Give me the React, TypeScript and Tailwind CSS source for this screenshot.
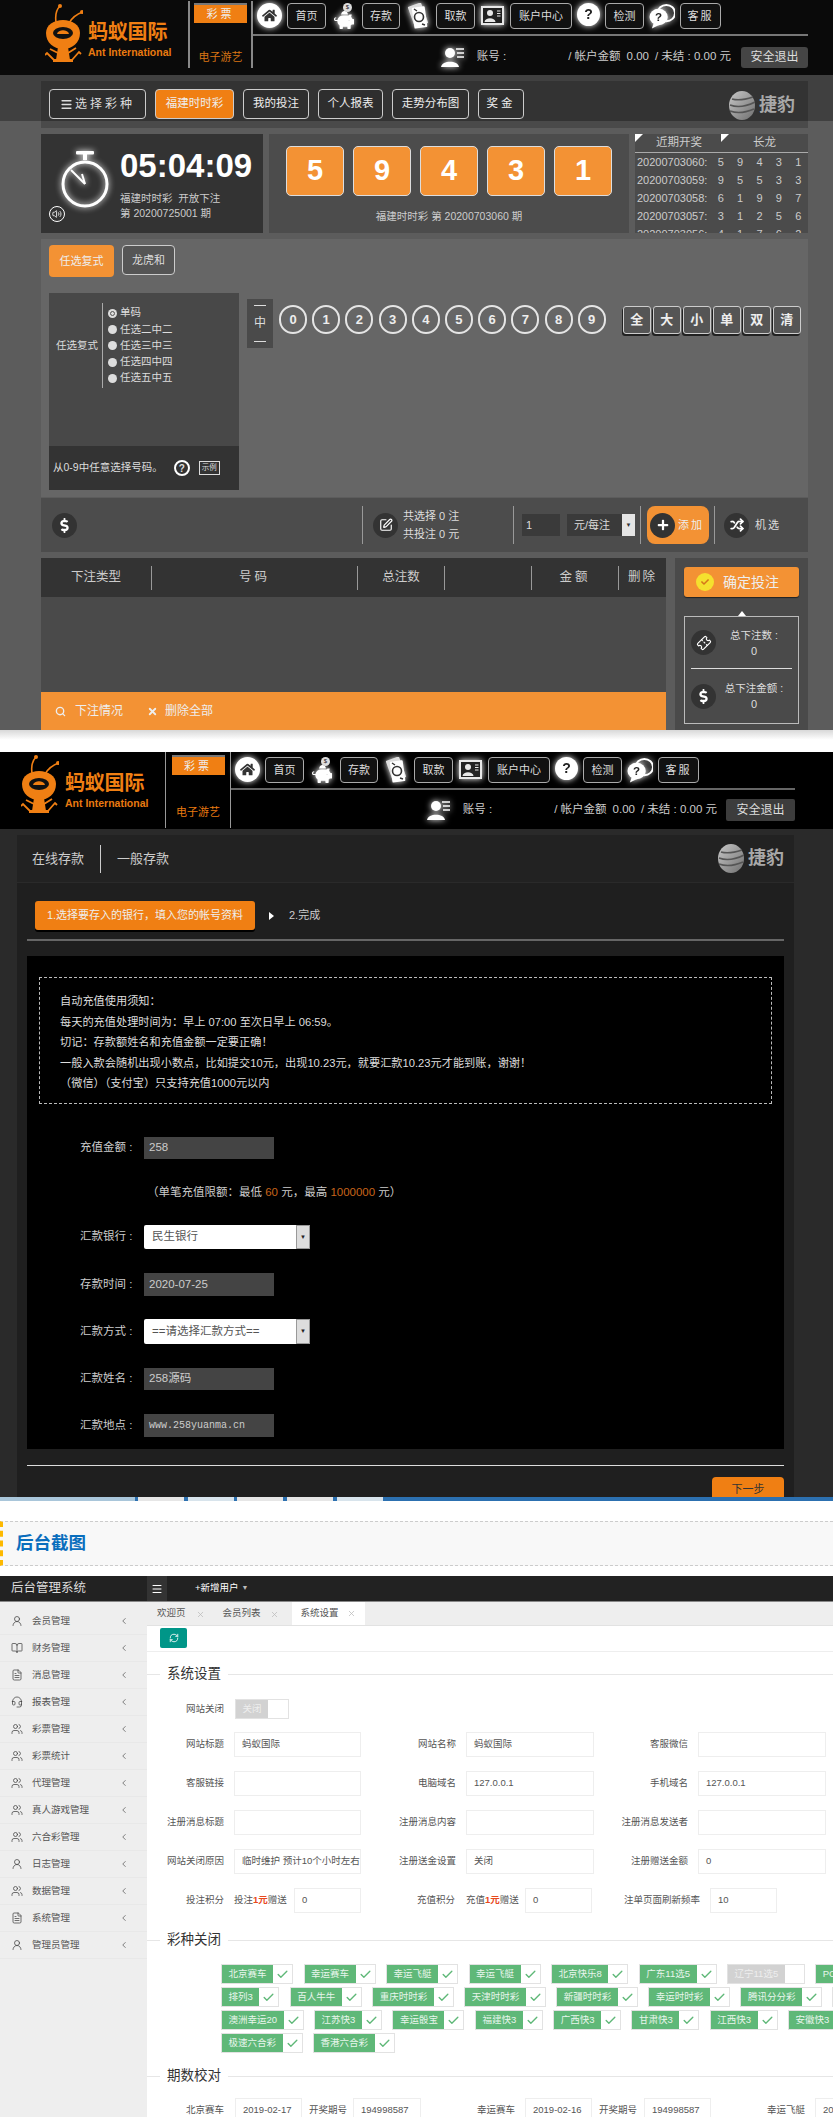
import { BookOpen, Check, ChevronLeft, FileText, Headset, Menu, RefreshCw, Search, Shuffle, SquarePen, Ticket, UserRound, Users, Volume2, X } from "lucide-react";
import { FaHome, FaPiggyBank, FaPlus, FaDollarSign, FaCheck } from "react-icons/fa";

const glow = "drop-shadow-[0_0_3px_#ffffff]";

/** 蚂蚁 logo */
function AntLogo() {
  return (
    <svg viewBox="0 0 38 60" className="h-[60px] w-[38px] shrink-0">
      <path d="M11 19C10 12 11 7 15 3M24 20C27 15 33 10 41 8" fill="none" stroke="#f07f13" strokeWidth="1.6" />
      <circle cx="15" cy="3" r="2" fill="#f07f13" />
      <circle cx="37" cy="9" r="2" fill="#f07f13" />
      <path d="M1 30C1 22 9 17 18 17C27 17 35 22 35 30C35 40 27 46 18 46C9 46 1 40 1 30Z" fill="#f07f13" />
      <ellipse cx="18" cy="30" rx="10" ry="6" fill="#111" />
      <path d="M12 31C13 26 23 26 24 31Z" fill="#f07f13" />
      <path d="M13 44L11 57H25L23 44Z" fill="#f07f13" />
      <path d="M9 57L2 50L0 52M27 57L34 49L36 51M13 50L5 46M23 50L31 45" fill="none" stroke="#f07f13" strokeWidth="1.8" />
      <rect x="8" y="56" width="20" height="3" fill="#f07f13" />
    </svg>
  );
}

/** 捷豹 logo */
function Jiebao({ className }: { className: string }) {
  return (
    <div className={`flex items-center gap-[4px] ${className}`}>
      <svg viewBox="0 0 26 29" className="h-[29px] w-[26px]">
        <defs>
          <linearGradient id="jb" x1="0" y1="0" x2="1" y2="1">
            <stop offset="0" stopColor="#c8c8c8" />
            <stop offset="1" stopColor="#6f6f6f" />
          </linearGradient>
        </defs>
        <ellipse cx="13" cy="14.5" rx="13" ry="14.5" fill="url(#jb)" />
        <path d="M3 8C10 10 18 8 24 6M1 14C9 17 18 15 26 11M1 20C9 23 18 21 25 18" fill="none" stroke="#555" strokeWidth="1.6" />
      </svg>
      <span className="text-[18px] font-bold text-[#a8a8a8]">捷豹</span>
    </div>
  );
}

function NavButton({ label, w, spaced }: { label: string; w: string; spaced?: boolean }) {
  return (
    <div className={`flex h-[26px] shrink-0 items-center justify-center rounded-[4px] border border-[#aaa] bg-[#111] text-[11px] text-[#ddd] ${spaced ? "tracking-[2px]" : ""} ${w}`}>
      {label}
    </div>
  );
}

function PiggyIcon() {
  return (
    <div className="relative flex w-[26px] shrink-0 justify-center pt-[7px] text-white">
      <FaPiggyBank size={20} className={glow} />
      <span className="absolute top-[0px] left-[12px] flex h-[9px] w-[9px] items-center justify-center rounded-full bg-[#ddd] text-[6px] text-[#222]">$</span>
    </div>
  );
}

function MoneyIcon() {
  return (
    <svg viewBox="0 0 26 26" className={`h-[26px] w-[26px] shrink-0 ${glow}`}>
      <rect x="6" y="1" width="14" height="22" rx="1" fill="#ddd" transform="rotate(-20 13 12)" />
      <rect x="8" y="4" width="13" height="21" rx="1" fill="#fff" transform="rotate(-8 14 14)" />
      <circle cx="14" cy="14" r="4.5" fill="none" stroke="#333" strokeWidth="1.6" />
      <path d="M9 6L12 8M17 21L20 22" stroke="#333" strokeWidth="1.4" />
    </svg>
  );
}

function IdIcon() {
  return (
    <svg viewBox="0 0 25 25" className={`h-[25px] w-[25px] shrink-0 ${glow}`}>
      <rect x="1" y="3" width="23" height="19" fill="#e8e8e8" />
      <rect x="3" y="5" width="19" height="15" fill="#222" />
      <circle cx="10" cy="10" r="3" fill="#e8e8e8" />
      <path d="M4.5 19C5 14 15 14 15.5 19Z" fill="#e8e8e8" />
      <path d="M17 8H20.5M17 10.5H20.5M17 13H20.5" stroke="#e8e8e8" strokeWidth="1" />
    </svg>
  );
}

function ChatIcon() {
  return (
    <svg viewBox="0 0 27 26" className={`h-[26px] w-[26px] shrink-0 ${glow}`}>
      <ellipse cx="18" cy="10" rx="9" ry="8.5" fill="none" stroke="#fff" strokeWidth="2" />
      <ellipse cx="10" cy="14" rx="9.5" ry="8.5" fill="#fff" />
      <path d="M5 20L3 26L11 22Z" fill="#fff" />
      <text x="10" y="18.5" textAnchor="middle" fontSize="12" fontWeight="700" fill="#222">?</text>
    </svg>
  );
}

function UserCardIcon() {
  return (
    <svg viewBox="0 0 24 22" className={`h-[22px] w-[24px] shrink-0 ${glow}`}>
      <circle cx="9" cy="7" r="5" fill="#fff" />
      <path d="M0 21C1 14 17 14 18 21Z" fill="#fff" />
      <path d="M15 3H23M16 7H23M16 11H23" stroke="#fff" strokeWidth="1.6" />
    </svg>
  );
}

function HelpDot() {
  return <div className={`flex h-[23px] w-[23px] shrink-0 items-center justify-center rounded-full bg-white text-[14px] font-bold text-[#222] ${glow}`}>?</div>;
}

function Header({ second }: { second?: boolean }) {
  return (
    <div className={second ? "flex h-[77px] bg-black pl-[21px]" : "flex h-[75px] bg-[#0a0a0a] pl-[45px]"}>
      <div className={second ? "flex w-[144px] shrink-0 items-start gap-[6px] pt-[2px]" : "flex w-[143px] shrink-0 items-start gap-[5px] pt-[3px]"}>
        <AntLogo />
        <div className="pt-[18px]">
          <div className="text-[20px] leading-[22px] font-bold tracking-[-0.2px] text-[#f07f13]">蚂蚁国际</div>
          <div className="mt-[3px] text-[10.5px] leading-[12px] font-bold text-[#e97a10]">Ant International</div>
        </div>
      </div>
      <div className={second ? "mb-[1px] flex w-[66px] shrink-0 flex-col items-center border-x border-[#999] pt-[3px]" : "my-[1px] mb-[7px] flex w-[65px] shrink-0 flex-col items-center border-x-2 border-[#888] pt-[2px]"}>
        <div className="flex h-[20px] w-[53px] items-center justify-center border-t-2 border-[#777] bg-[#f07f13] text-[11px] tracking-[3px] text-[#eee]">彩票</div>
        <div className={second ? "mt-[29px] text-[11px] text-[#e97a10]" : "mt-[26px] text-[11px] text-[#d97514]"}>电子游艺</div>
      </div>
      <div className={second ? "flex min-w-0 flex-1 flex-col pr-[38px]" : "flex min-w-0 flex-1 flex-col pr-[25px]"}>
        <div className={second ? "flex h-[38px] shrink-0 items-start gap-[5px] border-b-2 border-[#666] pt-[5px] pl-[4px]" : "flex h-[36px] shrink-0 items-start gap-[5px] border-b-2 border-[#777] pt-[3px] pl-[4px]"}>
          <div className={`flex h-[25px] w-[25px] shrink-0 items-center justify-center rounded-full bg-white text-[#333] ${glow}`}>
            <FaHome size={15} />
          </div>
          <NavButton label="首页" w="w-[39px]" />
          <PiggyIcon />
          <NavButton label="存款" w="w-[38px]" />
          <MoneyIcon />
          <NavButton label="取款" w="w-[39px]" />
          <IdIcon />
          <NavButton label="账户中心" w="w-[62px]" />
          <HelpDot />
          <NavButton label="检测" w="w-[39px]" />
          <ChatIcon />
          <NavButton label="客服" w="w-[41px]" spaced />
        </div>
        <div className={second ? "mt-[9px] flex items-center justify-end text-[11.5px] text-[#ccc]" : "mt-[10px] flex items-center justify-end text-[11.5px] text-[#ccc]"}>
          <UserCardIcon />
          <span className="ml-[12px]">账号 :</span>
          <span className="ml-[62px]">/ 帐户金额</span>
          <span className="ml-[6px]">0.00</span>
          <span className="ml-[6px]">/ 未结 : 0.00 元</span>
          <div className={second ? "ml-[9px] flex h-[22px] w-[69px] items-center justify-center rounded-[2px] bg-[#3c3c3c] text-[12px] text-[#ddd]" : "ml-[10px] flex h-[21px] w-[67px] items-center justify-center rounded-[3px] bg-[#454545] text-[12px] text-[#ddd]"}>
            安全退出
          </div>
        </div>
      </div>
    </div>
  );
}

function TopTab({ label, w, active, spaced }: { label: string; w: string; active?: boolean; spaced?: boolean }) {
  return (
    <div className={`flex h-[30px] shrink-0 items-center justify-center rounded-[4px] border border-[#ccc] text-[11.5px] text-[#eee] ${active ? "bg-[#f07f13]" : "bg-[#2e2e2e]"} ${spaced ? "tracking-[3px]" : ""} ${w}`}>
      {label}
    </div>
  );
}

function Stopwatch() {
  return (
    <svg viewBox="0 0 48 57" className={`h-[57px] w-[48px] shrink-0 ${glow}`}>
      <rect x="15" y="0" width="18" height="3.5" rx="1" fill="#fff" />
      <rect x="22" y="3" width="4" height="6" fill="#fff" />
      <circle cx="24" cy="33" r="22" fill="none" stroke="#fff" strokeWidth="3" />
      <path d="M10 19L24 33" stroke="#fff" strokeWidth="2" />
      <path d="M24 33L21 23" stroke="#fff" strokeWidth="2" />
    </svg>
  );
}

const history = [
  ["20200703060:", "59431"],
  ["20200703059:", "95533"],
  ["20200703058:", "61997"],
  ["20200703057:", "31256"],
  ["20200703056:", "41762"],
];

function DrawRow() {
  return (
    <div className="mt-[6px] flex h-[99px] gap-[6px]">
      <div className="flex w-[222px] shrink-0 bg-[#333] pt-[17px] pl-[20px]">
        <div className="relative">
          <Stopwatch />
          <div className="absolute top-[55px] left-[-12px] flex h-[16px] w-[16px] items-center justify-center rounded-full border border-white text-white">
            <Volume2 size={10} />
          </div>
        </div>
        <div className="ml-[11px] flex flex-col">
          <div className="mt-[-3px] text-[33px] leading-[36px] font-bold text-white">05:04:09</div>
          <div className="mt-[7px] text-[10.5px] leading-[15px] text-[#ccc]">福建时时彩&nbsp;&nbsp;开放下注</div>
          <div className="text-[10.5px] leading-[15px] text-[#ccc]">第 20200725001 期</div>
        </div>
      </div>
      <div className="flex w-[360px] shrink-0 flex-col items-center bg-[#4c4c4c] pt-[12px]">
        <div className="flex gap-[9px]">
          {[5, 9, 4, 3, 1].map((n, i) => (
            <div key={i} className="flex h-[50px] w-[58px] items-center justify-center rounded-[5px] border border-[#ddd] bg-[#f39234] text-[29px] font-bold text-white">
              {n}
            </div>
          ))}
        </div>
        <div className="mt-[13px] text-[10.5px] text-[#ccc]">福建时时彩 第 20200703060 期</div>
      </div>
      <div className="min-w-0 flex-1 overflow-hidden bg-[#4b4b4b] text-[#ccc]">
        <div className="flex h-[19px] border-b border-[#aaa] text-[11.5px]">
          <div className="relative flex w-[86px] items-center justify-center pl-[2px]">
            <span className="absolute top-0 left-0 h-0 w-0 border-t-[8px] border-r-[8px] border-t-white border-r-transparent" />
            近期开奖
          </div>
          <div className="relative flex flex-1 items-center justify-center">
            <span className="absolute top-0 left-0 h-0 w-0 border-t-[8px] border-r-[8px] border-t-white border-r-transparent" />
            长龙
          </div>
        </div>
        {history.map(([issue, nums]) => (
          <div key={issue} className="flex h-[18px] items-center pl-[2px] text-[11px]">
            <span className="w-[74px] shrink-0">{issue}</span>
            {nums.split("").map((d, i) => (
              <span key={i} className="w-[19.4px] shrink-0 text-center">
                {d}
              </span>
            ))}
          </div>
        ))}
      </div>
    </div>
  );
}

function Radio({ label, on }: { label: string; on?: boolean }) {
  return (
    <div className="flex h-[16.3px] items-center gap-[3px] text-[10.5px] text-[#ddd]">
      <span className={`flex h-[9px] w-[9px] items-center justify-center rounded-full bg-[#ddd]`}>{on ? <span className="h-[5px] w-[5px] rounded-full border border-[#555]" /> : null}</span>
      {label}
    </div>
  );
}

function PlayArea() {
  return (
    <div className="mt-[6px] h-[258px] bg-[#666] pt-[6px] pl-[8px]">
      <div className="flex gap-[8px]">
        <div className="flex h-[32px] w-[65px] items-center justify-center rounded-[4px] bg-[#f39234] text-[11px] text-[#eee]">任选复式</div>
        <div className="flex h-[30px] w-[53px] items-center justify-center rounded-[4px] border border-[#ccc] bg-[#555] text-[11px] text-[#ddd]">龙虎和</div>
      </div>
      <div className="mt-[16px] flex">
        <div className="flex h-[197px] w-[190px] shrink-0 flex-col">
          <div className="h-[153px] bg-[#484848] pt-[10px] pl-[7px]">
            <div className="flex">
              <div className="flex h-[85px] w-[47px] items-center border-r border-[#aaa] text-[10.5px] text-[#ddd]">任选复式</div>
              <div className="pt-[2px] pl-[5px]">
                <Radio label="单码" on />
                <Radio label="任选二中二" />
                <Radio label="任选三中三" />
                <Radio label="任选四中四" />
                <Radio label="任选五中五" />
              </div>
            </div>
          </div>
          <div className="flex h-[44px] items-center bg-[#333] pl-[4px] text-[10.5px] text-[#ddd]">
            从0-9中任意选择号码。
            <span className="ml-[11px] flex h-[16px] w-[16px] items-center justify-center rounded-full border-2 border-white text-[10px] font-bold">?</span>
            <span className="ml-[9px] flex h-[14px] w-[21px] items-center justify-center border border-[#ddd] text-[7.5px]">示例</span>
          </div>
        </div>
        <div className="mt-[6px] ml-[8px] flex h-[49px] w-[26px] shrink-0 flex-col items-center justify-between bg-[#4a4a4a] py-[6px] text-[12px] leading-[13px] text-[#ddd]">
          <span className="h-[1px] w-[12px] bg-[#ddd]" />
          中
          <span className="h-[1px] w-[12px] bg-[#ddd]" />
        </div>
        <div className="mt-[12px] ml-[6px] flex gap-[5.2px]">
          {[0, 1, 2, 3, 4, 5, 6, 7, 8, 9].map((n) => (
            <div key={n} className="flex h-[29px] w-[28px] items-center justify-center rounded-full border-2 border-[#e5e5e5] text-[13px] font-bold text-[#eee]">
              {n}
            </div>
          ))}
        </div>
        <div className="mt-[13px] ml-[17px] flex gap-[2px]">
          {["全", "大", "小", "单", "双", "清"].map((t) => (
            <div key={t} className="flex h-[28px] w-[28px] items-center justify-center rounded-[3px] border border-[#ccc] bg-[#555] text-[13px] font-bold text-[#eee] shadow-[-1px_2px_0_#222]">
              {t}
            </div>
          ))}
        </div>
      </div>
    </div>
  );
}

function DarkDot({ children }: { children: React.ReactNode }) {
  return <div className="flex h-[25px] w-[25px] shrink-0 items-center justify-center rounded-full bg-[#333] text-white">{children}</div>;
}

function BetBar() {
  return (
    <div className="mt-[1px] flex h-[54px] items-center bg-[#4c4c4c] text-[11px] text-[#ddd]">
      <div className="flex h-[38px] w-[321px] shrink-0 items-center pl-[11px]">
        <DarkDot>
          <FaDollarSign size={15} />
        </DarkDot>
      </div>
      <div className="flex h-[38px] w-[151px] shrink-0 items-center border-l border-[#999] pl-[10px]">
        <DarkDot>
          <SquarePen size={14} />
        </DarkDot>
        <div className="ml-[5px] leading-[18px]">
          <div>共选择 0 注</div>
          <div>共投注 0 元</div>
        </div>
      </div>
      <div className="flex h-[38px] w-[127px] shrink-0 items-center border-l border-[#999] pl-[8px]">
        <div className="flex h-[22px] w-[38px] items-center bg-[#3a3a3a] pl-[4px]">1</div>
        <div className="ml-[7px] flex h-[22px] w-[68px] items-center justify-between bg-[#3a3a3a] pl-[7px]">
          元/每注
          <span className="flex h-[22px] w-[13px] items-center justify-center bg-[#e5e5e5] text-[6px] text-[#333]">▼</span>
        </div>
      </div>
      <div className="flex h-[38px] w-[75px] shrink-0 items-center border-x border-[#999] pl-[6px]">
        <div className="flex h-[38px] w-[62px] items-center rounded-[8px] bg-[#f39234] pl-[3px] tracking-[2px] text-[#eee]">
          <DarkDot>
            <FaPlus size={12} />
          </DarkDot>
          <span className="ml-[3px]">添加</span>
        </div>
      </div>
      <div className="ml-[9px]">
        <DarkDot>
          <Shuffle size={14} strokeWidth={3} />
        </DarkDot>
      </div>
      <span className="ml-[6px] tracking-[2px]">机选</span>
    </div>
  );
}

const betCols = [
  ["下注类型", "w-[111px]", ""],
  ["号码", "w-[206px]", "tracking-[3px]"],
  ["总注数", "w-[87px]", ""],
  ["", "w-[87px]", ""],
  ["金额", "w-[87px]", "tracking-[3px]"],
];

function BetTable() {
  return (
    <div className="mt-[6px] flex h-[172px] gap-[9px]">
      <div className="flex w-[625px] shrink-0 flex-col bg-[#4a4a4a]">
        <div className="flex h-[39px] items-center bg-[#333] text-[12.5px] text-[#ccc]">
          {betCols.map(([t, w, sp], i) => (
            <div key={i} className={`flex h-[24px] items-center justify-center border-r border-[#999] ${w} ${sp}`}>
              {t}
            </div>
          ))}
          <div className="flex flex-1 justify-center tracking-[2px]">删除</div>
        </div>
        <div className="mt-auto flex h-[38px] items-center bg-[#f39234] pl-[14px] text-[12px] text-[#eee]">
          <Search size={11} strokeWidth={3} />
          <span className="ml-[9px]">下注情况</span>
          <X size={11} strokeWidth={4} className="ml-[24px]" />
          <span className="ml-[7px]">删除全部</span>
        </div>
      </div>
      <div className="min-w-0 flex-1 bg-[#4a4a4a] px-[9px] pt-[9px]">
        <div className="flex h-[30px] items-center rounded-[3px] bg-[#f39234] pl-[12px] text-[14px] text-[#eee] shadow-[0_1px_1px_#222]">
          <span className="flex h-[18px] w-[18px] items-center justify-center rounded-full bg-[#f5e02e] text-[#d5771a]">
            <FaCheck size={8} />
          </span>
          <span className="ml-[9px]">确定投注</span>
        </div>
        <div className="mx-auto mt-[14px] h-0 w-0 border-x-[4px] border-b-[5px] border-x-transparent border-b-white" />
        <div className="h-[108px] border border-[#bbb] px-[6px] text-[10.5px] text-[#ddd]">
          <div className="flex h-[52px] items-center border-b border-[#ddd]">
            <DarkDot>
              <Ticket size={14} className="rotate-[-45deg]" />
            </DarkDot>
            <div className="flex-1 text-center leading-[16px]">
              <div>总下注数 :</div>
              <div className="text-[11px]">0</div>
            </div>
          </div>
          <div className="flex h-[54px] items-center">
            <DarkDot>
              <FaDollarSign size={15} />
            </DarkDot>
            <div className="flex-1 text-center leading-[16px]">
              <div>总下注金额 :</div>
              <div className="text-[11px]">0</div>
            </div>
          </div>
        </div>
      </div>
    </div>
  );
}

function LotteryScreen() {
  return (
    <div className="h-[730px] overflow-hidden bg-[linear-gradient(#404040_121px,#5c5c5c_121px)]">
      <Header />
      <div className="mx-[41px] w-[767px] pt-[6px]">
        <div className="flex h-[47px] items-start gap-[9px] bg-[linear-gradient(#333333_40px,#4a4a4a_40px)] pt-[8px] pl-[8px]">
          <div className="flex h-[30px] w-[97px] shrink-0 items-center justify-center gap-[2px] rounded-[4px] border border-[#ccc] bg-[#2e2e2e] text-[12px] tracking-[3px] text-[#ddd]">
            <Menu size={13} strokeWidth={3} />
            选择彩种
          </div>
          <TopTab label="福建时时彩" w="w-[79px]" active />
          <TopTab label="我的投注" w="w-[66px]" />
          <TopTab label="个人报表" w="w-[65px]" />
          <TopTab label="走势分布图" w="w-[77px]" />
          <TopTab label="奖金" w="w-[46px]" spaced />
          <Jiebao className="mt-[2px] ml-auto mr-[13px]" />
        </div>
        <DrawRow />
        <PlayArea />
        <BetBar />
        <BetTable />
      </div>
    </div>
  );
}

function FormRow({ label, value, h, mt, mono }: { label: string; value: string; h: string; mt: string; mono?: boolean }) {
  return (
    <div className={`flex items-center text-[11.5px] text-[#ccc] ${mt}`}>
      <span className="w-[64px] shrink-0">{label}</span>
      <div className={`flex w-[130px] items-center bg-[#444] pl-[5px] ${h} ${mono ? "font-['Liberation_Mono',monospace] text-[10px]" : ""}`}>{value}</div>
    </div>
  );
}

function SelectRow({ label, value, h, mt }: { label: string; value: string; h: string; mt: string }) {
  return (
    <div className={`flex items-center text-[11.5px] text-[#ccc] ${mt}`}>
      <span className="w-[64px] shrink-0">{label}</span>
      <div className={`flex w-[166px] items-center justify-between rounded-[2px] bg-white pl-[8px] text-[#555] ${h}`}>
        {value}
        <span className="flex h-full w-[14px] items-center justify-center border border-[#999] bg-[#ddd] text-[6px] text-[#222]">▼</span>
      </div>
    </div>
  );
}

const notice = [
  "自动充值使用须知：",
  "每天的充值处理时间为：早上 07:00 至次日早上 06:59。",
  "切记：存款额姓名和充值金额一定要正确！",
  "一般入款会随机出现小数点，比如提交10元，出现10.23元，就要汇款10.23元才能到账，谢谢！",
  "（微信）（支付宝）只支持充值1000元以内",
];

function DepositScreen() {
  return (
    <div className="h-[745px] overflow-hidden bg-[#2a2a2a]">
      <Header second />
      <div className="mx-[17px] mt-[6px] w-[777px]">
        <div className="flex h-[47px] items-center bg-[#222] pl-[15px] text-[13px] text-[#ccc]">
          <span>在线存款</span>
          <span className="mx-[16px] h-[28px] w-[1px] bg-[#ccc]" />
          <span>一般存款</span>
          <Jiebao className="ml-auto mr-[10px]" />
        </div>
        <div className="mt-[1px] h-[620px] bg-[#1f1f1f] px-[10px] pt-[18px]">
          <div className="ml-[8px] flex items-center">
            <div className="flex h-[29px] w-[220px] items-center justify-center rounded-[3px] bg-[#f07f13] text-[11px] text-[#eee] shadow-[0_2px_0_#000]">
              1.选择要存入的银行，填入您的帐号资料
            </div>
            <span className="ml-[14px] h-0 w-0 border-y-[4px] border-l-[5px] border-y-transparent border-l-white" />
            <span className="ml-[15px] text-[11px] text-[#ccc]">2.完成</span>
          </div>
          <div className="mt-[9px] h-[2px] bg-[#666]" />
          <div className="mt-[15px] h-[493px] bg-black px-[12px] pt-[21px]">
            <div className="h-[127px] border border-dashed border-[#bbb] pt-[13px] pl-[20px] text-[11.2px] leading-[20.5px] text-[#ddd]">
              {notice.map((line) => (
                <div key={line}>{line}</div>
              ))}
            </div>
            <div className="ml-[41px]">
              <FormRow label="充值金额 :" value="258" h="h-[22px]" mt="mt-[33px]" />
              <div className="mt-[24px] ml-[67px] text-[11.5px] leading-[18px] text-[#ccc]">
                （单笔充值限额：最低 <span className="text-[#c8641a]">60</span> 元，最高 <span className="text-[#c8641a]">1000000</span> 元）
              </div>
              <SelectRow label="汇款银行 :" value="民生银行" h="h-[24px]" mt="mt-[24px]" />
              <FormRow label="存款时间 :" value="2020-07-25" h="h-[23px]" mt="mt-[24px]" />
              <SelectRow label="汇款方式 :" value="==请选择汇款方式==" h="h-[25px]" mt="mt-[23px]" />
              <FormRow label="汇款姓名 :" value="258源码" h="h-[22px]" mt="mt-[24px]" />
              <FormRow label="汇款地点 :" value="www.258yuanma.cn" h="h-[23px]" mt="mt-[24px]" mono />
            </div>
          </div>
          <div className="mt-[16px] h-[1px] bg-[#ddd]" />
          <div className="mt-[11px] ml-auto flex h-[30px] w-[72px] items-start justify-center rounded-[4px] bg-[#f07f13] pt-[4px] text-[11px] text-[#333]">下一步</div>
        </div>
      </div>
    </div>
  );
}

function Strip() {
  return (
    <div className="flex h-[4px] bg-[#2c70b0]">
      <span className="w-[135px] bg-[#a9c6da]" />
      <span className="ml-[3px] w-[46px] bg-[#e6e6e6]" />
      <span className="ml-[4px] w-[46px] bg-[#d8e4ec]" />
      <span className="ml-[3px] w-[46px] bg-[#e6e6e6]" />
      <span className="ml-[4px] w-[46px] bg-[#e6e6e6]" />
      <span className="ml-[4px] w-[46px] bg-[#d8e4ec]" />
    </div>
  );
}

const menu: [string, typeof UserRound][] = [
  ["会员管理", UserRound],
  ["财务管理", BookOpen],
  ["消息管理", FileText],
  ["报表管理", Headset],
  ["彩票管理", Users],
  ["彩票统计", Users],
  ["代理管理", Users],
  ["真人游戏管理", Users],
  ["六合彩管理", Users],
  ["日志管理", UserRound],
  ["数据管理", Users],
  ["系统管理", FileText],
  ["管理员管理", UserRound],
];

function Sidebar() {
  return (
    <div className="h-full w-[147px] shrink-0 bg-[#eeeeee] pt-[6px]">
      {menu.map(([label, Icon]) => (
        <div key={label} className="flex h-[27px] items-center border-b border-[#e8e8e8] pl-[11px] text-[9.5px] text-[#555]">
          <Icon size={12} strokeWidth={1.5} className="text-[#444]" />
          <span className="ml-[9px]">{label}</span>
          <ChevronLeft size={10} className="mr-[18px] ml-auto text-[#666]" />
        </div>
      ))}
    </div>
  );
}

function Title({ text, mt }: { text: string; mt: string }) {
  return (
    <div className={`flex h-[20px] items-center ${mt}`}>
      <span className="h-[1px] w-[13px] bg-[#e6e6e6]" />
      <span className="px-[7px] text-[13.5px] text-[#333]">{text}</span>
      <span className="h-[1px] flex-1 bg-[#e6e6e6]" />
    </div>
  );
}

function Label({ text, w }: { text: string; w: string }) {
  return <span className={`shrink-0 text-right text-[9.5px] text-[#555] ${w}`}>{text}</span>;
}

function Box({ value, w, className = "" }: { value?: string; w: string; className?: string }) {
  return <div className={`flex h-[25px] shrink-0 items-center border border-[#eeeeee] bg-white pl-[7px] text-[9.5px] text-[#555] ${w} ${className}`}>{value}</div>;
}

function FieldRow({ items }: { items: [string, string?][] }) {
  const labelW = ["w-[77px]", "w-[95px]", "w-[94px]"];
  const boxW = ["w-[127px]", "w-[128px]", "w-[128px]"];
  return (
    <div className="mt-[14px] flex items-center">
      {items.map(([label, value], i) => (
        <div key={label} className="flex items-center">
          <Label text={label} w={labelW[i]} />
          <Box value={value} w={boxW[i]} className="ml-[10px]" />
        </div>
      ))}
    </div>
  );
}

function Tag({ label, off }: { label: string; off?: boolean }) {
  return (
    <div className="flex h-[20px] shrink-0 border border-[#e2e2e2] bg-white">
      <span className={`flex items-center px-[6.5px] text-[9.5px] ${off ? "bg-[#d2d2d2] text-[#eee]" : "bg-[#5fb878] text-[#e8f5ec]"}`}>{label}</span>
      <span className="flex w-[19px] items-center justify-center text-[#5fb878]">{off ? null : <Check size={13} strokeWidth={2.5} />}</span>
    </div>
  );
}

const tagRows: string[][] = [
  ["北京赛车", "幸运赛车", "幸运飞艇", "幸运飞艇", "北京快乐8", "广东11选5", "辽宁11选5", "PC蛋蛋"],
  ["排列3", "百人牛牛", "重庆时时彩", "天津时时彩", "新疆时时彩", "幸运时时彩", "腾讯分分彩", "五分彩"],
  ["澳洲幸运20", "江苏快3", "幸运骰宝", "福建快3", "广西快3", "甘肃快3", "江西快3", "安徽快3"],
  ["极速六合彩", "香港六合彩"],
];

function AdminScreen() {
  return (
    <div className="bg-white">
      <div className="mt-[20px] flex h-[45px] items-center border-y border-dashed border-[#ccc] bg-[#f8f8f8] border-l-[3px] border-l-[#fdb900] pl-[13px]">
        <span className="text-[17.5px] font-bold text-[#0a6ebd]">后台截图</span>
      </div>
      <div className="mt-[10px] flex h-[26px] items-center border-b border-[#888] bg-[#222] text-white">
        <span className="w-[147px] pl-[11px] text-[12.5px] text-[#ddd]">后台管理系统</span>
        <span className="flex h-[25px] w-[20px] items-center justify-center bg-[#333]">
          <Menu size={12} />
        </span>
        <span className="ml-[28px] text-[9.5px]">+新增用户</span>
        <span className="ml-[3px] text-[7px] text-[#bbb]">▼</span>
      </div>
      <div className="flex h-[515px]">
        <Sidebar />
        <div className="min-w-0 flex-1">
          <div className="flex h-[24px] items-stretch border-b border-[#e2e2e2] bg-[#eeeeee] pl-[10px] text-[9.5px] text-[#555]">
            <span className="flex items-center">欢迎页</span>
            <X size={9} className="mt-[8px] ml-[10px] text-[#bbb]" />
            <span className="ml-[18px] flex items-center">会员列表</span>
            <X size={9} className="mt-[8px] ml-[9px] text-[#bbb]" />
            <span className="ml-[13px] flex w-[73px] items-center justify-between bg-white px-[9px]">
              系统设置
              <X size={9} className="text-[#bbb]" />
            </span>
          </div>
          <div className="flex h-[26px] border-b border-[#eeeeee] pt-[2px] pl-[13px]">
            <span className="flex h-[20px] w-[27px] items-center justify-center rounded-[2px] bg-[#009688] text-white">
              <RefreshCw size={10} />
            </span>
          </div>
          <Title text="系统设置" mt="mt-[12px]" />
          <div className="mt-[15px] flex items-center">
            <Label text="网站关闭" w="w-[77px]" />
            <div className="ml-[11px] flex h-[20px] w-[54px] border border-[#e2e2e2]">
              <span className="flex w-[32px] items-center justify-center bg-[#d2d2d2] text-[9.5px] text-[#eee]">关闭</span>
            </div>
          </div>
          <div className="mt-[-1px]">
            <FieldRow items={[["网站标题", "蚂蚁国际"], ["网站名称", "蚂蚁国际"], ["客服微信"]]} />
            <FieldRow items={[["客服链接"], ["电脑域名", "127.0.0.1"], ["手机域名", "127.0.0.1"]]} />
            <FieldRow items={[["注册消息标题"], ["注册消息内容"], ["注册消息发送者"]]} />
            <div className="mt-[14px] flex items-center">
              <Label text="网站关闭原因" w="w-[77px]" />
              <Box value="临时维护 预计10个小时左右" w="w-[127px]" className="ml-[10px] overflow-hidden" />
              <Label text="注册送金设置" w="w-[95px]" />
              <Box value="关闭" w="w-[128px]" className="ml-[10px] justify-between pr-[6px]" />
              <Label text="注册赠送金额" w="w-[94px]" />
              <Box value="0" w="w-[128px]" className="ml-[10px]" />
            </div>
          </div>
          <div className="mt-[14px] flex items-center text-[9.5px] text-[#555]">
            <Label text="投注积分" w="w-[77px]" />
            <span className="ml-[10px] w-[60px]">
              投注<span className="font-bold text-[#e8491d]">1元</span>赠送
            </span>
            <Box value="0" w="w-[67px]" />
            <Label text="充值积分" w="w-[94px]" />
            <span className="ml-[11px] w-[59px]">
              充值<span className="font-bold text-[#e8491d]">1元</span>赠送
            </span>
            <Box value="0" w="w-[67px]" />
            <Label text="注单页面刷新频率" w="w-[108px]" />
            <Box value="10" w="w-[67px]" className="ml-[10px]" />
          </div>
          <Title text="彩种关闭" mt="mt-[17px]" />
          <div className="mt-[14px] flex flex-col gap-[3px] pl-[74px]">
            {tagRows.map((row, r) => (
              <div key={r} className="flex gap-[10.5px]">
                {row.map((t) => (
                  <Tag key={t + r} label={t} off={t === "辽宁11选5"} />
                ))}
              </div>
            ))}
          </div>
          <Title text="期数校对" mt="mt-[13px]" />
          <div className="mt-[12px] flex items-center text-[9.5px] text-[#555]">
            <Label text="北京赛车" w="w-[77px]" />
            <Box value="2019-02-17" w="w-[67px]" className="ml-[11px]" />
            <Label text="开奖期号" w="w-[45px]" />
            <Box value="194998587" w="w-[68px]" className="ml-[6px]" />
            <Label text="幸运赛车" w="w-[94px]" />
            <Box value="2019-02-16" w="w-[67px]" className="ml-[10px]" />
            <Label text="开奖期号" w="w-[45px]" />
            <Box value="194998587" w="w-[67px]" className="ml-[7px]" />
            <Label text="幸运飞艇" w="w-[94px]" />
            <Box value="2019-02-16" w="w-[67px]" className="ml-[10px]" />
          </div>
        </div>
      </div>
    </div>
  );
}

export default function App() {
  return (
    <div className="h-[2117px] w-[833px] overflow-hidden whitespace-nowrap bg-white font-['Liberation_Sans','Noto_Sans_CJK_SC',sans-serif]">
      <LotteryScreen />
      <div className="h-[22px] bg-[linear-gradient(#d8d8d8,#ffffff_45%)]" />
      <DepositScreen />
      <Strip />
      <AdminScreen />
    </div>
  );
}
